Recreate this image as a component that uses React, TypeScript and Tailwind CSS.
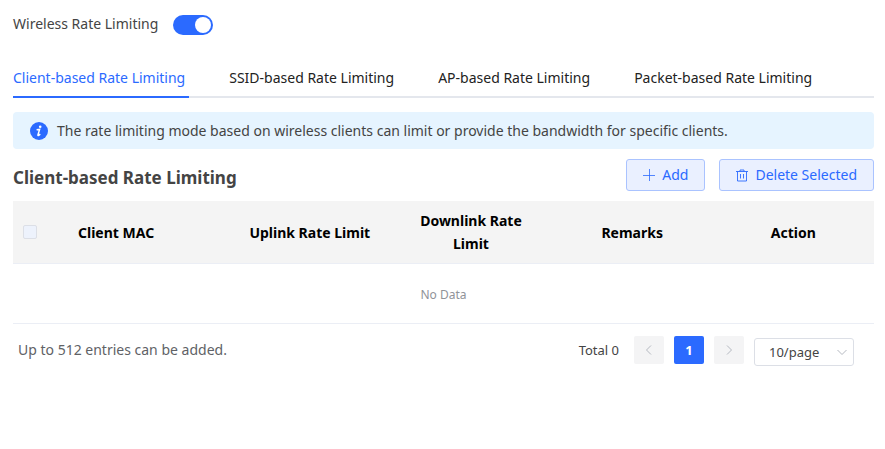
import { useState } from "react"

const tabs = [
  "Client-based Rate Limiting",
  "SSID-based Rate Limiting",
  "AP-based Rate Limiting",
  "Packet-based Rate Limiting",
]

const columns = ["Uplink Rate Limit", "Downlink Rate Limit", "Remarks", "Action"]

function InfoIcon() {
  return (
    <svg viewBox="0 0 18 18" className="w-[18px] h-[18px] shrink-0" aria-hidden="true">
      <circle cx="9" cy="9" r="9" fill="#2b6aff" />
      <circle cx="10.2" cy="4.7" r="1.3" fill="#fff" />
      <path d="M6.6 7.8l3-.4-1.6 5.2q-.3 1.2.7.7l1.6-1.2" fill="none" stroke="#fff" strokeWidth="1.5" />
    </svg>
  )
}

function PlusIcon() {
  return (
    <svg viewBox="0 0 12 12" className="w-3 h-3" fill="none" stroke="currentColor" strokeWidth="0.8" aria-hidden="true">
      <path d="M6.5 0v12M0 6.5h12" />
    </svg>
  )
}

function TrashIcon() {
  return (
    <svg viewBox="0 0 12 13" className="w-3 h-[13px]" fill="none" stroke="currentColor" strokeWidth="0.9" aria-hidden="true">
      <path d="M0 2.5h12M4 2.5v-1.5h4v1.5M1.5 2.5v9.5h9v-9.5M4.5 5v4.5M7.5 5v4.5" />
    </svg>
  )
}

function Chevron({ d }: { d: string }) {
  return (
    <svg viewBox="0 0 10 10" className="w-[10px] h-[10px]" fill="none" stroke="#b4b8c0" strokeWidth="1" aria-hidden="true">
      <path d={d} />
    </svg>
  )
}

export default function WirelessRateLimiting() {
  const [enabled, setEnabled] = useState(true)
  const [active, setActive] = useState(0)
  const [pageSize, setPageSize] = useState("10")

  return (
    <main className="pl-[13px] pr-[11px] pt-3 bg-white text-[#444] text-sm font-['Noto_Sans','Open_Sans',sans-serif]">
      <div className="flex items-center gap-[15px]">
        <label htmlFor="enable" className="leading-6">Wireless Rate Limiting</label>
        <button
          id="enable"
          type="button"
          role="switch"
          aria-checked={enabled}
          onClick={() => setEnabled(!enabled)}
          className={`flex items-center w-10 h-5 mt-[2px] px-[2px] rounded-full ${enabled ? "bg-[#2b6aff] justify-end" : "bg-[#dcdfe6] justify-start"}`}
        >
          <span className="w-4 h-4 rounded-full bg-white" />
        </button>
      </div>

      <div role="tablist" className="flex gap-10 mt-[22px] border-b-2 border-[#e4e7ed]">
        {tabs.map((tab, i) => (
          <button
            key={tab}
            type="button"
            role="tab"
            aria-selected={active === i}
            onClick={() => setActive(i)}
            className={`h-10 pt-[2px] pr-1 -mb-0.5 border-b-2 whitespace-nowrap ${active === i ? "border-[#2b6aff] text-[#2b6aff]" : "border-transparent text-[#222]"}`}
          >
            {tab}
          </button>
        ))}
      </div>

      <div className="flex items-center gap-[9px] mt-[14px] px-[17px] py-2 rounded bg-[#e6f4ff]">
        <InfoIcon />
        <p className="leading-[21px]">
          The rate limiting mode based on wireless clients can limit or provide the bandwidth for specific clients.
        </p>
      </div>

      <div className="flex items-center justify-between mt-[10px]">
        <h1 className="pt-[6px] text-[17px] leading-6 font-bold">{tabs[active]}</h1>
        <div className="flex gap-[14px] text-[#2b6aff]">
          <button type="button" className="flex items-center gap-[7px] h-8 px-4 rounded-[3px] border border-[#aac3ff] bg-[#eaf0ff]">
            <PlusIcon />
            Add
          </button>
          <button type="button" className="flex items-center gap-[7px] h-8 px-4 rounded-[3px] border border-[#aac3ff] bg-[#eaf0ff]">
            <TrashIcon />
            Delete Selected
          </button>
        </div>
      </div>

      <table className="w-full mt-[10px] table-fixed border-collapse">
        <thead>
          <tr className="bg-[#f4f4f4] border-b border-[#ebeef5] text-black leading-[23px]">
            <th className="w-[55px] px-[10px] py-2 text-left">
              <input
                type="checkbox"
                disabled
                aria-label="Select all"
                className="block appearance-none w-[14px] h-[14px] rounded-[2px] border border-[#dcdfe6] bg-[#edf2fc]"
              />
            </th>
            <th className="px-[10px] py-2 text-left font-bold">Client MAC</th>
            {columns.map(col => (
              <th key={col} className="px-4 py-2 text-center font-bold">{col}</th>
            ))}
          </tr>
        </thead>
        <tbody>
          <tr className="border-b border-[#ebeef5]">
            <td colSpan={6} className="h-[60px] pt-[2px] text-center text-xs text-[#909399]">No Data</td>
          </tr>
        </tbody>
      </table>

      <div className="flex items-start justify-between mt-3 pl-[5px] pr-5">
        <p className="leading-7 text-[#606266]">Up to 512 entries can be added.</p>
        <div className="flex items-start gap-[10px]">
          <span className="mr-[5px] text-[13px] leading-7">Total 0</span>
          <button type="button" disabled aria-label="Previous page" className="flex items-center justify-center w-[30px] h-7 rounded-[2px] bg-[#f4f4f5]">
            <Chevron d="M7 0.5L2.5 5L7 9.5" />
          </button>
          <button type="button" className="w-[30px] h-7 rounded-[2px] bg-[#2b6aff] text-[13px] font-bold text-white">1</button>
          <button type="button" disabled aria-label="Next page" className="flex items-center justify-center w-[30px] h-7 rounded-[2px] bg-[#f4f4f5]">
            <Chevron d="M3 0.5L7.5 5L3 9.5" />
          </button>
          <div className="grid items-center w-[100px] mt-[2px]">
            <select
              aria-label="Entries per page"
              value={pageSize}
              onChange={e => setPageSize(e.target.value)}
              className="col-start-1 row-start-1 appearance-none w-full h-7 pl-[14px] rounded-[3px] border border-[#dcdfe6] bg-white text-[13px]"
            >
              <option value="10">10/page</option>
              <option value="20">20/page</option>
              <option value="50">50/page</option>
            </select>
            <span className="col-start-1 row-start-1 justify-self-end mr-[7px] pointer-events-none">
              <Chevron d="M0.5 3L5 7.5L9.5 3" />
            </span>
          </div>
        </div>
      </div>
    </main>
  )
}
